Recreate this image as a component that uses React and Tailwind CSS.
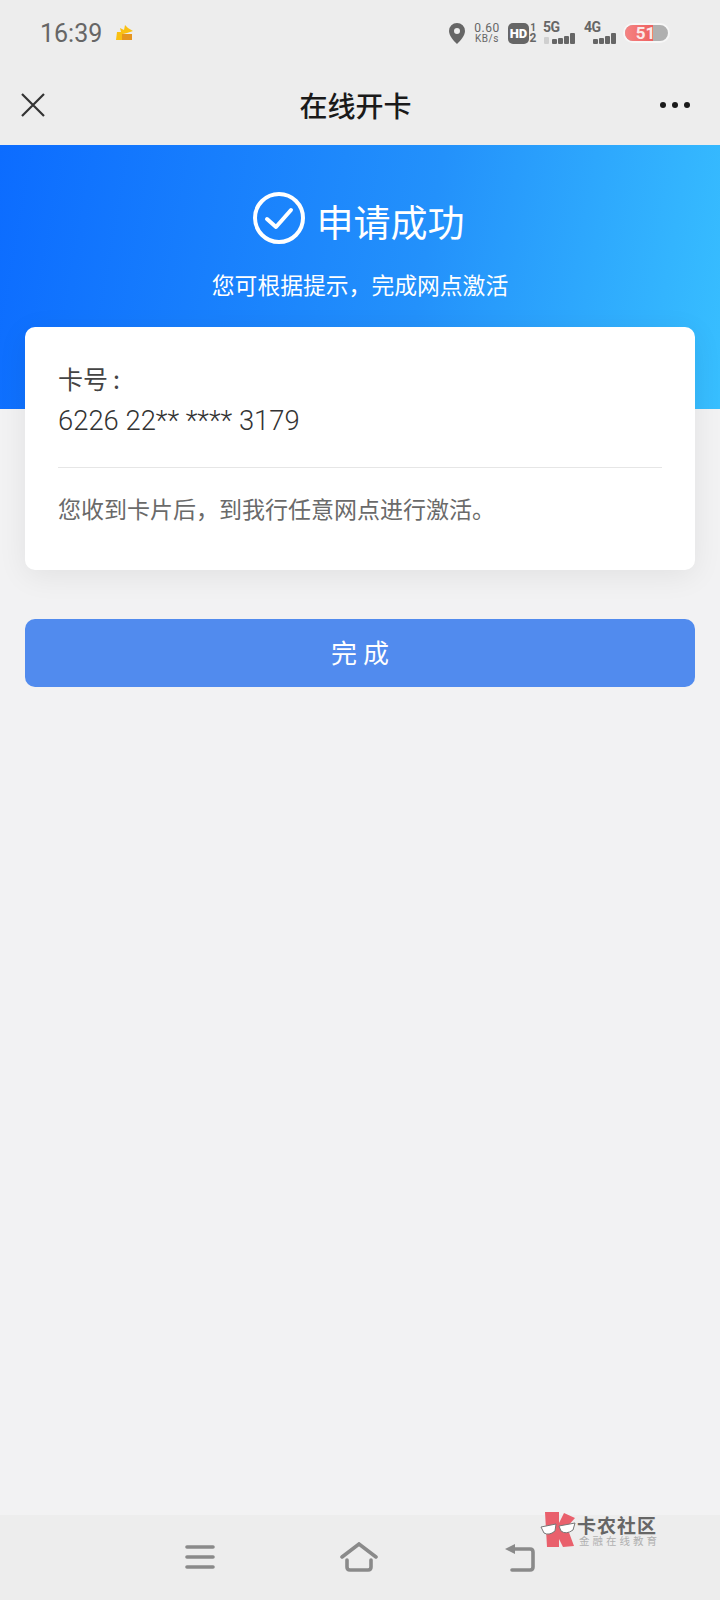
const FONT = "font-['Noto_Sans_CJK_SC','Noto_Sans',sans-serif]";

function StatusBar() {
  return (
    <div className="flex items-center justify-between h-[68px] pl-[40px] pr-[50px] pb-[2px]">
      <div className="flex items-center gap-[14px]">
        <span className="font-['Roboto',sans-serif] text-[25px] leading-none text-[#666]">16:39</span>
        <svg width="17" height="16" viewBox="0 0 17 16" className="mb-[1px]">
          <path d="M0 15 L1 7 L5 7 L4 3 L8 5 L9 0 L12 3 L17 6 L11 8 L7 9 L7 15 Z" fill="#f9c013" />
          <rect x="6" y="9" width="10" height="6" fill="#e6951f" />
        </svg>
      </div>
      <div className="flex items-center text-[#666]">
        <svg width="16" height="21" viewBox="0 0 16 21" className="mr-[8px]">
          <path fillRule="evenodd" d="M8 0a8 8 0 0 1 8 8c0 5-5 10-8 13-3-3-8-8-8-13a8 8 0 0 1 8-8zm0 5a3 3 0 1 0 0 6 3 3 0 0 0 0-6z" fill="#666" />
        </svg>
        <div className="flex flex-col items-center w-[28px] mr-[7px] font-['Roboto',sans-serif] text-[#666]">
          <span className="text-[12px] leading-[11px] tracking-[0.5px]">0.60</span>
          <span className="text-[10px] leading-[10px] tracking-[0.5px]">KB/s</span>
        </div>
        <span className="flex items-center justify-center w-[21px] h-[21px] rounded-[5px] bg-[#666] text-white font-['Roboto',sans-serif] font-black text-[13px] leading-none">HD</span>
        <div className="flex flex-col items-center w-[8px] mr-[6px] font-['Roboto',sans-serif] font-bold text-[#666]">
          <span className="text-[10px] leading-[10px]">1</span>
          <span className="text-[12px] leading-[11px]">2</span>
        </div>
        <Signal label="5G" arrows />
        <div className="w-[9px]" />
        <Signal label="4G" />
        <div className="relative w-[47px] h-[20px] ml-[7px] rounded-full overflow-hidden border-2 border-[#f7f7f7] bg-[#b0b0b0]">
          <div className="w-[28px] h-full bg-gradient-to-r from-[#f58383] to-[#ee6060]" />
          <span className="absolute inset-0 flex items-center justify-center pr-[2px] font-['Roboto',sans-serif] font-bold text-[17px] leading-none text-[#fbe9e9]">51</span>
        </div>
      </div>
    </div>
  );
}

function Signal({ label, arrows }) {
  return (
    <div className="relative w-[32px] h-[22px] font-['Roboto',sans-serif] font-bold text-[#666]">
      <span className="absolute left-0 top-[-2px] text-[14px] leading-[14px] tracking-[-0.5px]">{label}</span>
      <div className="absolute right-0 bottom-0 flex items-end gap-[1px]">
        <i className="block w-[5px] h-[5px] bg-[#666] rounded-[1px]" />
        <i className="block w-[5px] h-[6px] bg-[#666] rounded-[1px]" />
        <i className="block w-[5px] h-[8px] bg-[#666] rounded-[1px]" />
        <i className="block w-[5px] h-[11px] bg-[#666] rounded-[1px]" />
      </div>
      {arrows && <span className="absolute left-[1px] bottom-0 w-[5px] h-[7px] bg-[#cfcfcf] rounded-[1px]" />}
    </div>
  );
}

function Header() {
  return (
    <div className="flex items-center justify-between h-[77px] pl-[21px] pr-[30px] pb-[4px]">
      <svg width="24" height="24" viewBox="0 0 24 24" fill="none" stroke="#333" strokeWidth="2.2">
        <path d="M1 1 L23 23 M23 1 L1 23" />
      </svg>
      <h1 className="ml-[6px] text-[28px] leading-none font-medium text-[#1a1a1a]">在线开卡</h1>
      <div className="flex gap-[6px]">
        <i className="block w-[6px] h-[6px] rounded-full bg-[#1a1a1a]" />
        <i className="block w-[6px] h-[6px] rounded-full bg-[#1a1a1a]" />
        <i className="block w-[6px] h-[6px] rounded-full bg-[#1a1a1a]" />
      </div>
    </div>
  );
}

function Watermark() {
  return (
    <div className="absolute left-[540px] top-[1512px] flex items-center gap-[1px]">
      <svg width="36" height="36" viewBox="0 0 36 36">
        <path d="M5 0 H19 V11 L24 1 L35 6 L27 15 L34 34 L23 35 L19 27 V35 H7 Z" fill="#e9606c" />
        <path d="M1 15 L16 12 L15 19 Q9 24 4 21 Z" fill="#fff" stroke="#777" strokeWidth="1" />
        <path d="M19 14 L35 11 L33 18 Q26 23 21 19 Z" fill="#fff" stroke="#777" strokeWidth="1" />
      </svg>
      <div className="flex flex-col items-start">
        <span className="text-[19px] leading-[21px] font-bold text-[#666] tracking-[1px]">卡农社区</span>
        <span className="ml-[2px] text-[10.5px] leading-[12px] text-[#b0b0b0] tracking-[3px]">金融在线教育</span>
      </div>
    </div>
  );
}

function BottomNav() {
  return (
    <div className="flex items-center justify-center h-[85px] bg-[#ededed] pb-[1px]">
      <div className="flex items-center justify-center gap-[125px]">
        <svg width="30" height="24" viewBox="0 0 30 24" fill="none" stroke="#8a8a8a" strokeWidth="3.6" strokeLinecap="round">
          <path d="M2 2 H28 M2 12 H28 M2 22 H28" />
        </svg>
        <svg width="38" height="30" viewBox="0 0 38 30" fill="none" stroke="#8a8a8a" strokeWidth="3.6" strokeLinecap="round">
          <path d="M2 15 L19 2 L36 15" />
          <path d="M7 18 V25 Q7 28 10 28 H28 Q31 28 31 25 V18" />
        </svg>
        <svg width="32" height="30" viewBox="0 0 32 30" fill="none">
          <path d="M2 7 L12 2 L12 12 Z" fill="#8a8a8a" />
          <path d="M10 7 H27 Q30 7 30 10 V25 Q30 28 27 28 H9" stroke="#8a8a8a" strokeWidth="3.6" strokeLinecap="round" />
        </svg>
      </div>
    </div>
  );
}

export default function App() {
  return (
    <div className={`relative flex flex-col w-[720px] h-[1600px] bg-[#f2f2f3] ${FONT}`}>
      <div className="bg-[#ededed]">
        <StatusBar />
        <Header />
      </div>

      {/* Banner */}
      <div className="flex flex-col items-center h-[264px] pt-[47px] bg-[linear-gradient(100deg,#0c6cff_0%,#2391fb_58%,#38bfff_100%)] text-white">
        <div className="flex items-center gap-[12px] pr-[3px]">
          <svg width="52" height="52" viewBox="0 0 52 52" fill="none" stroke="#fff" strokeLinecap="round" strokeLinejoin="round" className="mb-[5px]">
            <circle cx="26" cy="26" r="24" strokeWidth="4" />
            <path d="M14 27 L23 35 L38 18" strokeWidth="4" />
          </svg>
          <span className="pt-[1px] text-[37px] leading-[56px]">申请成功</span>
        </div>
        <p className="mt-[19px] text-[22.8px] leading-[34px]">您可根据提示，完成网点激活</p>
      </div>

      {/* Card */}
      <div className="flex-1 px-[25px]">
        <div className="mt-[-82px] h-[243px] px-[33px] pt-[32px] rounded-[10px] bg-white shadow-[0_6px_30px_rgba(0,0,0,0.07)]">
          <p className="text-[25px] leading-[38px] text-[#444]">卡号<span className="ml-[5px]">:</span></p>
          <p className="mt-[4px] font-['Roboto',sans-serif] font-light text-[27.4px] leading-[40px] text-[#333]">6226 22** **** 3179</p>
          <div className="mt-[26px] border-t border-[#e6e6e6]" />
          <p className="mt-[23px] text-[23px] leading-[34px] text-[#6a6a6a]">您收到卡片后，到我行任意网点进行激活。</p>
        </div>
        <button className="flex items-center justify-center w-full h-[68px] mt-[49px] pl-[6px] pb-[3px] rounded-[10px] bg-[#518bee] text-white text-[26px] tracking-[6px]">完成</button>
      </div>

      <BottomNav />
      <Watermark />
    </div>
  );
}
